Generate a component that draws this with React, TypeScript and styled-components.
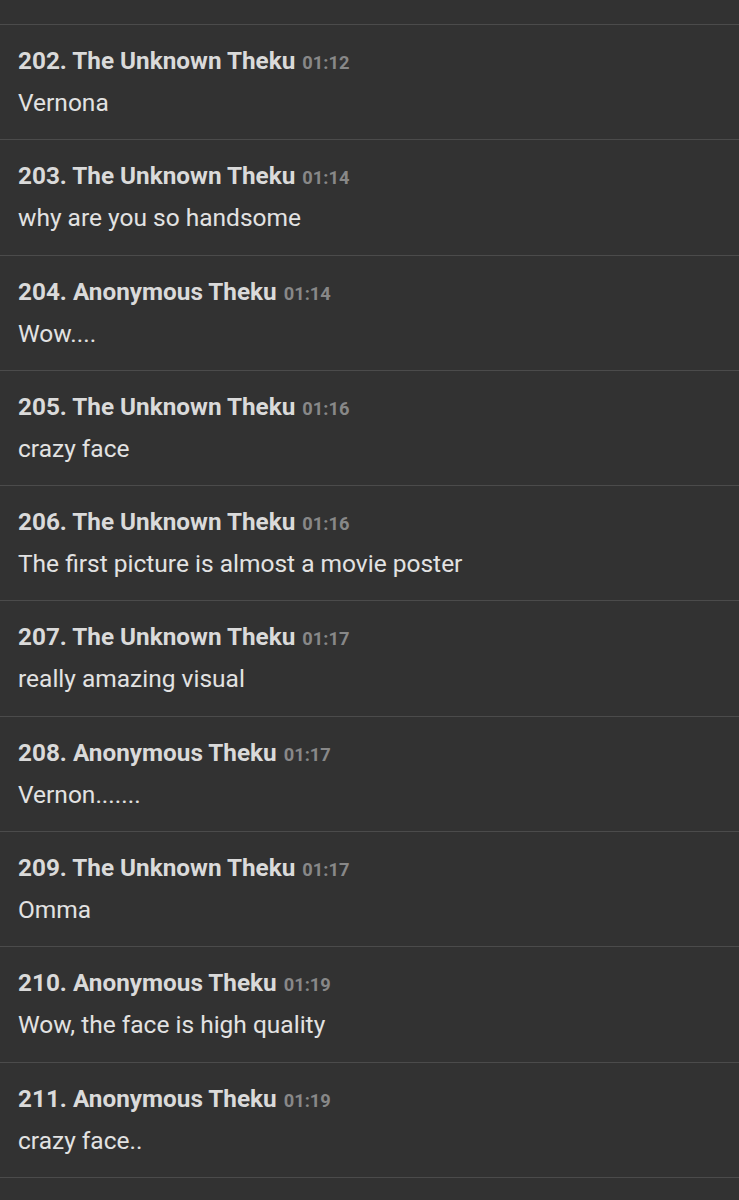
import styled, { createGlobalStyle } from "styled-components";

const GlobalStyle = createGlobalStyle`
  html, body {
    margin: 0;
    padding: 0;
    background: #323232;
  }
`;

type Comment = {
  no: number;
  author: string;
  time: string;
  text: string;
};

const comments: Comment[] = [
  { no: 202, author: "The Unknown Theku", time: "01:12", text: "Vernona" },
  { no: 203, author: "The Unknown Theku", time: "01:14", text: "why are you so handsome" },
  { no: 204, author: "Anonymous Theku", time: "01:14", text: "Wow...." },
  { no: 205, author: "The Unknown Theku", time: "01:16", text: "crazy face" },
  { no: 206, author: "The Unknown Theku", time: "01:16", text: "The first picture is almost a movie poster" },
  { no: 207, author: "The Unknown Theku", time: "01:17", text: "really amazing visual" },
  { no: 208, author: "Anonymous Theku", time: "01:17", text: "Vernon......." },
  { no: 209, author: "The Unknown Theku", time: "01:17", text: "Omma" },
  { no: 210, author: "Anonymous Theku", time: "01:19", text: "Wow, the face is high quality" },
  { no: 211, author: "Anonymous Theku", time: "01:19", text: "crazy face.." },
];

const Page = styled.div`
  width: 739px;
  min-height: 1200px;
  background: #323232;
  font-family: Roboto, "Liberation Sans", sans-serif;
  padding-top: 24px;
  box-sizing: border-box;
`;

const List = styled.ul`
  list-style: none;
  margin: 0;
  padding: 0;
  border-top: 1.5px solid #4b4b4b;
`;

const Item = styled.li`
  height: 115.3px;
  box-sizing: border-box;
  padding: 20px 18px 0;
  border-bottom: 1.5px solid #4b4b4b;
`;

const Header = styled.div`
  display: flex;
  align-items: baseline;
  gap: 7px;
  line-height: 32px;
`;

const Author = styled.span`
  font-size: 24.3px;
  font-weight: 700;
  color: #dadada;
`;

const Time = styled.span`
  font-size: 18.3px;
  font-weight: 700;
  color: #888888;
`;

const Body = styled.div`
  margin-top: 8px;
  font-size: 24.5px;
  line-height: 32px;
  color: #e2e2e2;
`;

const App = () => {
  return (
    <Page>
      <GlobalStyle />
      <List>
        {comments.map((c) => (
          <Item key={c.no}>
            <Header>
              <Author>
                {c.no}. {c.author}
              </Author>
              <Time>{c.time}</Time>
            </Header>
            <Body>{c.text}</Body>
          </Item>
        ))}
      </List>
    </Page>
  );
};

export default App;
